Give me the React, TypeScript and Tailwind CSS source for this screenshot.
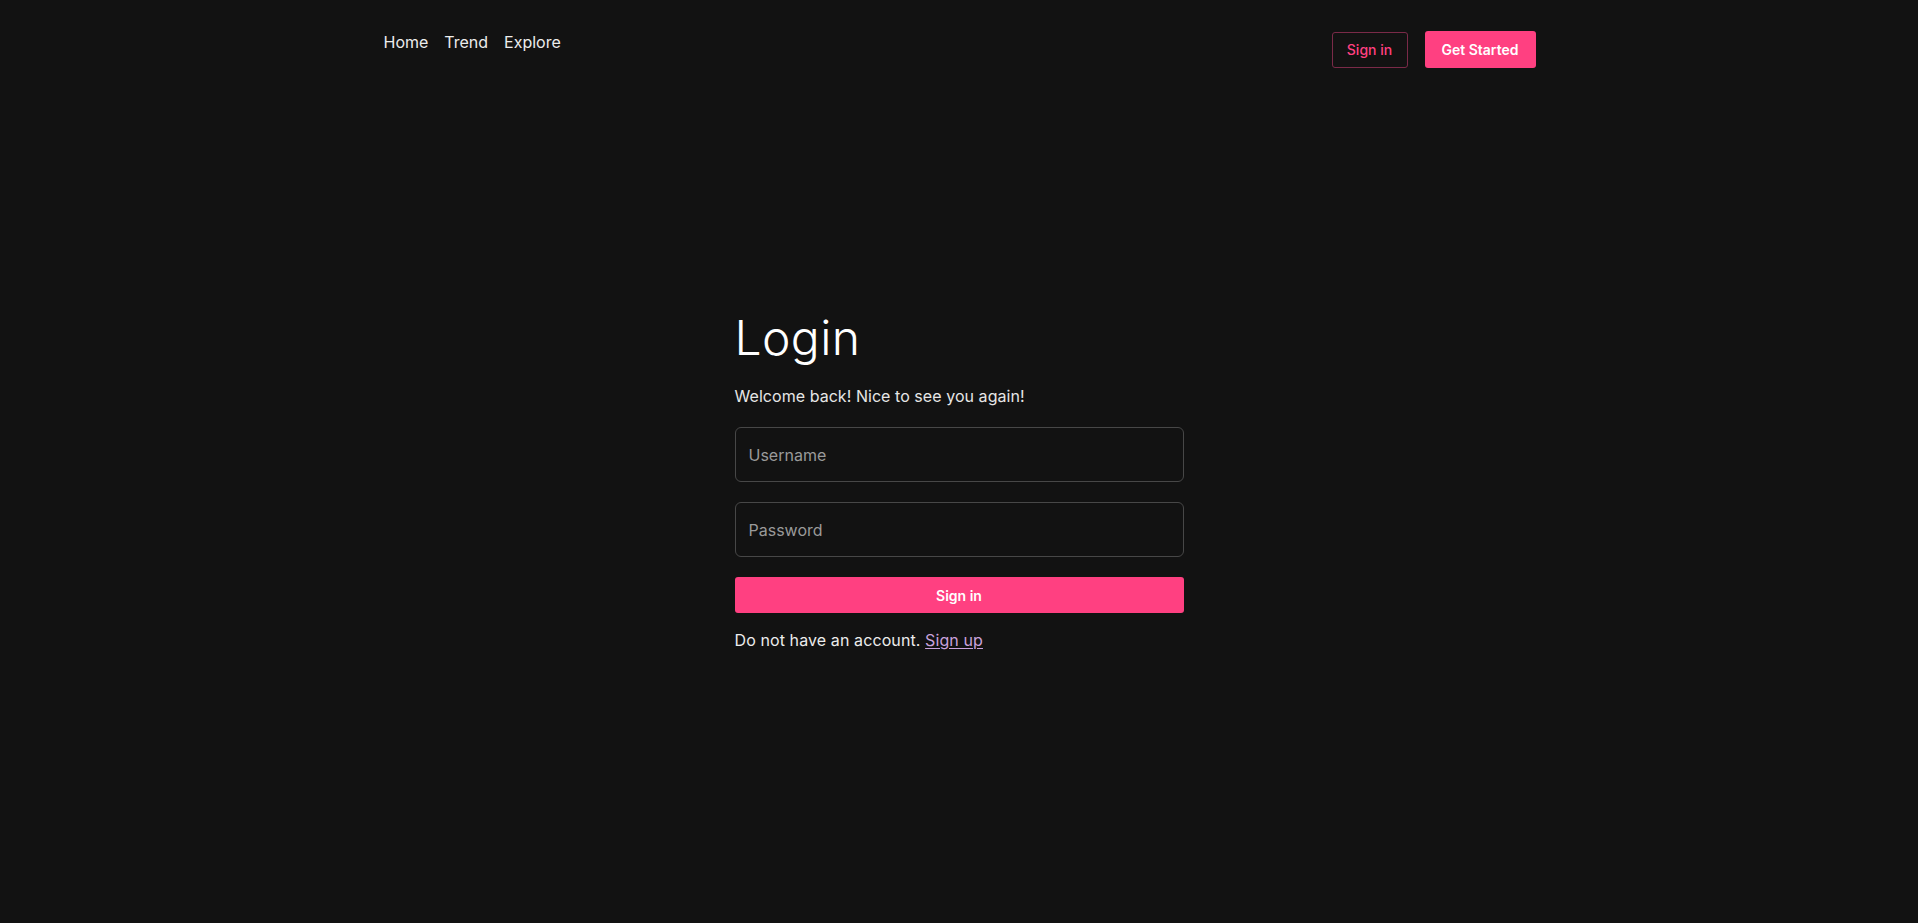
import React from "react";

export default function App() {
  return (
    <div
      className="min-h-screen w-full bg-[#121212] text-white"
      style={{ fontFamily: "Inter, 'Noto Sans', sans-serif" }}
    >
      <nav className="mx-auto flex w-[1153px] items-start justify-between pl-[1px] pt-[31px]">
        <div className="flex gap-4 text-[16px] leading-[22px] text-[#ececec]">
          <a href="#">Home</a>
          <a href="#">Trend</a>
          <a href="#">Explore</a>
        </div>
        <div className="flex items-center gap-[17px]">
          <button className="h-[36px] w-[76px] rounded-[3px] border border-[#7a2a48] text-[14px] font-medium text-[#ff4081]">
            Sign in
          </button>
          <button className="h-[37px] w-[111px] rounded-[3px] bg-[#ff4081] text-[14px] font-semibold text-white">
            Get Started
          </button>
        </div>
      </nav>

      <main className="mx-auto w-[449px] pt-[246px]">
        <h1 className="text-[48px] font-light leading-[48px] tracking-[0.4px] text-white">Login</h1>
        <p className="mt-[22px] text-[16px] leading-[24px] tracking-[0.05px] text-[#e6e6e6]">
          Welcome back! Nice to see you again!
        </p>
        <form className="mt-[19px] flex flex-col gap-[20px]" onSubmit={(e) => e.preventDefault()}>
          <input
            type="text"
            placeholder="Username"
            className="h-[55px] w-full rounded-[6px] border border-[#474747] bg-transparent px-[13px] text-[16px] text-white outline-none placeholder:text-[#9a9a9a]"
          />
          <input
            type="password"
            placeholder="Password"
            className="h-[55px] w-full rounded-[6px] border border-[#474747] bg-transparent px-[13px] text-[16px] text-white outline-none placeholder:text-[#9a9a9a]"
          />
          <button
            type="submit"
            className="h-[36px] w-full rounded-[3px] bg-[#ff4081] text-[14px] font-semibold text-white"
          >
            Sign in
          </button>
        </form>
        <p className="mt-[15px] text-[16px] leading-[24px] tracking-[0.1px] text-[#ececec]">
          Do not have an account.{" "}
          <a href="#" className="text-[#c9a2dc] underline underline-offset-2">
            Sign up
          </a>
        </p>
      </main>
    </div>
  );
}
